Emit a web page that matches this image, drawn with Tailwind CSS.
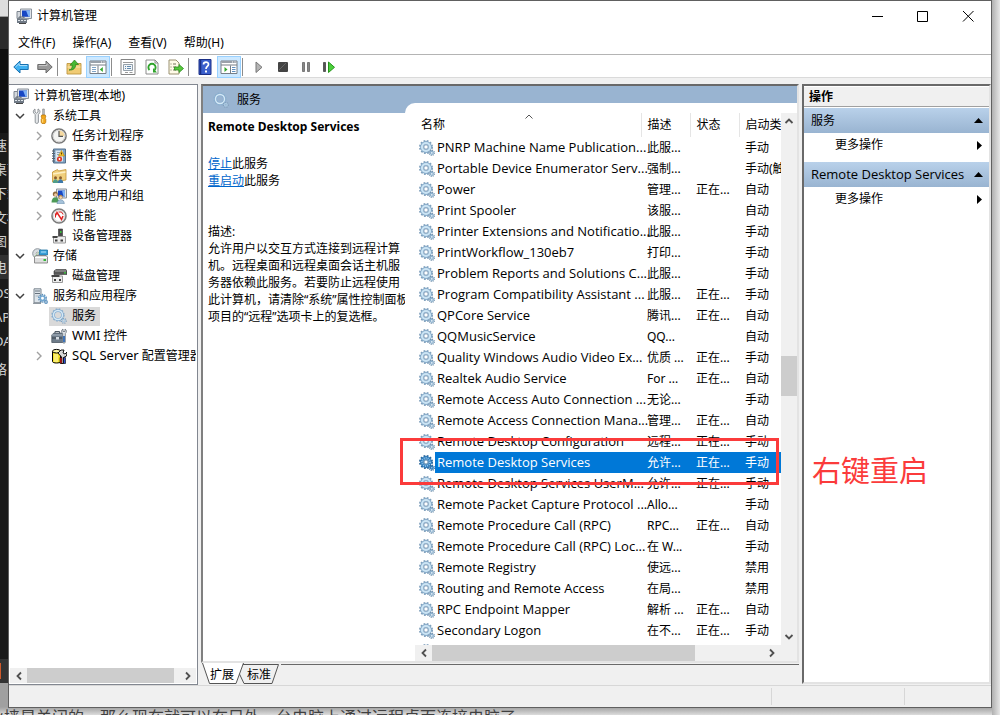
<!DOCTYPE html>
<html lang="zh-CN">
<head>
<meta charset="utf-8">
<title>计算机管理</title>
<script src="https://cdn.jsdelivr.net/npm/@tailwindcss/browser@4"></script>
</head>
<body class="relative h-screen overflow-hidden bg-[#e4e4e4] px-2 pb-[7px] font-['Noto_Sans','Noto_Sans_CJK_SC',sans-serif] text-xs text-black">

<svg class="hidden" aria-hidden="true">
  <symbol id="i-gear" viewBox="0 0 16 16">
    <circle cx="7" cy="7" r="5.9" fill="none" stroke="#7f9fbb" stroke-width="2.2" stroke-dasharray="1.7 1.39"/>
    <circle cx="7" cy="7" r="4.2" fill="none" stroke="#86abca" stroke-width="3.4"/>
    <circle cx="7" cy="7" r="4" fill="none" stroke="#cbe4f4" stroke-width="2.2"/>
    <circle cx="7" cy="7" r="2.2" fill="#fff" stroke="#6388aa" stroke-width=".8"/>
    <circle cx="12.8" cy="12.8" r="2.5" fill="none" stroke="#7392ad" stroke-width="1.4" stroke-dasharray="1 .96"/>
    <circle cx="12.8" cy="12.8" r="1.5" fill="#e9f2f8" stroke="#8cb0cd" stroke-width="1.3"/>
  </symbol>
  <symbol id="i-gear-sel" viewBox="0 0 16 16">
    <circle cx="7" cy="7" r="5.9" fill="none" stroke="#2a669a" stroke-width="2.2" stroke-dasharray="1.7 1.39"/>
    <circle cx="7" cy="7" r="4.2" fill="none" stroke="#2c78b8" stroke-width="3.4"/>
    <circle cx="7" cy="7" r="4" fill="none" stroke="#8cc2ea" stroke-width="2" stroke-dasharray="1 1"/>
    <circle cx="7" cy="7" r="2.1" fill="#fff" stroke="#245f92" stroke-width=".8"/>
    <circle cx="12.8" cy="12.8" r="2.5" fill="none" stroke="#2a669a" stroke-width="1.4" stroke-dasharray="1 .96"/>
    <circle cx="12.8" cy="12.8" r="1.4" fill="#9cc8ec" stroke="#2c78b8" stroke-width="1.2"/>
  </symbol>
  <symbol id="i-gear-light" viewBox="0 0 16 16">
    <circle cx="7" cy="7" r="5.9" fill="none" stroke="#8fb0cc" stroke-width="1.6" stroke-dasharray="1.7 1.39"/>
    <circle cx="7" cy="7" r="4.5" fill="none" stroke="#86add0" stroke-width="2.8"/>
    <circle cx="7" cy="7" r="4.5" fill="none" stroke="#d5e9f6" stroke-width="1.4"/>
    <circle cx="12.8" cy="12.8" r="2.4" fill="none" stroke="#7f9cb8" stroke-width="1.3" stroke-dasharray="1 .9"/>
    <circle cx="12.8" cy="12.8" r="1.4" fill="none" stroke="#a9c8e0" stroke-width="1.2"/>
  </symbol>
  <symbol id="i-computer" viewBox="0 0 16 16">
    <path d="M1 3.5h4v7H1z" fill="#d5d9de" stroke="#7d858f"/>
    <path d="M4.5 1h11v9.5h-11z" fill="#dfe3e8" stroke="#8b929b"/>
    <path d="M6 2.5h8v6.3H6z" fill="#1746c4"/>
    <path d="M10 2.5h4v6.3h-1.5z" fill="#7fb2f5"/>
    <path d="M7 10.5h5l1 1.5H7z" fill="#a2a9b2"/>
    <path d="M1 11h10v4H1z" fill="#707a86"/>
    <path d="M3 10V9h5v1" fill="none" stroke="#5d6670"/>
    <path d="M2 12.5h8" stroke="#dfe5ea" stroke-dasharray="2 1"/>
    <path d="M3 15.5h7" stroke="#444"/>
  </symbol>
  <symbol id="i-tools" viewBox="0 0 16 16">
    <path d="M3 1v3l1.5 1.2L6 4V1c1.6.6 2.2 2 1.9 3.4L6.4 6.6v7.6c0 1.6-3.2 1.6-3.2 0V6.6L1.6 4.9C.9 3.4 1.5 1.8 3 1z" fill="#e5e8ea" stroke="#868b90" stroke-width=".9"/>
    <path d="M10.7 1h1.6v6h-1.6z" fill="#c7cacc" stroke="#777" stroke-width=".6"/>
    <path d="M9.7 7h3.6l.6 2-1 1 .9 1.2v3L13 15.5h-3l-.8-1.3v-3l.9-1.2-1-1z" fill="#f2a71c" stroke="#b77404" stroke-width=".7"/>
    <path d="M10.7 11v3.5" stroke="#ffe18a"/>
  </symbol>
  <symbol id="i-clock" viewBox="0 0 16 16">
    <circle cx="8" cy="8" r="7.1" fill="#f4f4f2" stroke="#777" stroke-width="1.5"/>
    <circle cx="8" cy="8" r="5.8" fill="none" stroke="#d4d4d4"/>
    <path d="M8 8V2.5A5.5 5.5 0 0 1 13.5 8z" fill="#f5d9a0"/>
    <path d="M8 3v5.3h4" fill="none" stroke="#555" stroke-width="1.2"/>
  </symbol>
  <symbol id="i-event" viewBox="0 0 16 16">
    <path d="M2.500 1h12v14h-12z" fill="#7fa3c4" stroke="#55718d"/>
    <path d="M4.500 2.500h7.500v11H4.500z" fill="#dbe7f1"/>
    <path d="M1 3h3M1 5.500h3M1 8h3M1 10.500h3M1 13h3" stroke="#59636d"/>
    <path d="M6 4.500h3M6 6.500h2" stroke="#8aa0b5"/>
    <path d="M10.500 2.500l3 5.500h-6z" fill="#f7c62f" stroke="#b58409" stroke-width=".6"/>
    <path d="M10.500 4.500v2" stroke="#5a3b00"/>
    <circle cx="8.500" cy="11" r="2.600" fill="#dc3a28"/><circle cx="8.500" cy="11" r=".9" fill="#fff"/>
  </symbol>
  <symbol id="i-share" viewBox="0 0 16 16">
    <path d="M1.500 4l5-2.500 1 1.500 7.500-1.500V12L1.500 14z" fill="#f0cf7c" stroke="#c49536" stroke-width=".8"/>
    <path d="M2 6l12.500-2" stroke="#fdf0c4" stroke-width="1.500"/>
    <circle cx="4.500" cy="9.800" r="1.500" fill="#8b5d2d"/><path d="M1.800 15c0-5 5.200-5 5.400 0z" fill="#4f9d8a"/>
    <circle cx="9.500" cy="9.800" r="1.500" fill="#8b5d2d"/><path d="M6.800 15c.2-5 5.200-5 5.400 0z" fill="#3d78a8"/>
  </symbol>
  <symbol id="i-users" viewBox="0 0 16 16">
    <path d="M5.5 1h10v9h-10z" fill="#dfe3e8" stroke="#8b929b"/>
    <path d="M7 2.5h7v6H7z" fill="#1746c4"/><path d="M11 2.5h3v6h-1.5z" fill="#7fb2f5"/>
    <circle cx="4.3" cy="6" r="2.5" fill="#8f6a3d"/><circle cx="4.6" cy="6.8" r="1.5" fill="#f0c9a0"/>
    <path d="M.5 14.5c0-7 7.5-7 7.5 0z" fill="#4d9a57"/>
    <circle cx="9.500" cy="9" r="2.200" fill="#ad8653"/><circle cx="9.700" cy="9.600" r="1.300" fill="#f4d5b2"/>
    <path d="M6 15.800c0-5.500 7.300-5.500 7.300 0z" fill="#a5c2da" stroke="#587c9d" stroke-width=".5"/>
  </symbol>
  <symbol id="i-perf" viewBox="0 0 16 16">
    <circle cx="8" cy="8" r="7" fill="#fff" stroke="#7c7c7c" stroke-width="1.600"/>
    <circle cx="8" cy="8" r="5.500" fill="none" stroke="#bbb" stroke-width=".6"/>
    <path d="M4.500 7.500L6 4.500l4.500 7 1.500-3.500" fill="none" stroke="#e02020" stroke-width="1.500"/>
    <path d="M4.500 5.500v4M7.500 4h3l1.500 2.500" fill="none" stroke="#d61f1f"/>
  </symbol>
  <symbol id="i-device" viewBox="0 0 16 16">
    <path d="M7.5 1h4v8h-4z" fill="#4a4a4a" stroke="#333" stroke-width=".6"/><path d="M9 3h1.5v2H9z" fill="#39c43b"/>
    <path d="M2.5 8.5h12v6.5h-12z" fill="#ececec" stroke="#9a9a9a"/><path d="M1.5 8h5v2h-5z" fill="#444"/>
    <path d="M4 11.5h2.5v2H4zM9.5 11.5H12v2H9.5z" fill="#3d3d3d"/>
  </symbol>
  <symbol id="i-storage" viewBox="0 0 16 16">
    <circle cx="5.5" cy="5.5" r="4.8" fill="#d9dde0" stroke="#8d959c"/><circle cx="5.5" cy="5.5" r="1.3" fill="#fff" stroke="#777" stroke-width=".6"/>
    <path d="M5.5 5.5L9 2.2M5.5 5.5L2 9" stroke="#a9cf9f"/>
    <path d="M7.5 2h8v5h-8z" fill="#3aa0d8" stroke="#1f73a5" stroke-width=".8"/><path d="M9 4h5" stroke="#b8e3fa"/>
    <path d="M2.5 9l1.5-1.5h10L15.5 9v6h-13z" fill="#dedede" stroke="#777" stroke-width=".8"/><path d="M3 9.5h12" stroke="#fff"/><path d="M11.500 11h2.500v2h-2.500z" fill="#35b53a"/>
  </symbol>
  <symbol id="i-disk" viewBox="0 0 16 16">
    <path d="M3 3l2-1.5h10L16 3v3.500H3z" fill="#555" stroke="#3b3b3b" stroke-width=".6"/><path d="M4 3h11" stroke="#aaa"/><path d="M13 4.200h2v1.300h-2z" fill="#39d43b"/>
    <path d="M1.500 8h10v6.500h-10z" fill="#ececec" stroke="#9a9a9a"/><path d="M.5 7h8v2h-8z" fill="#444"/>
    <path d="M3 11h2v2H3zM8 11h2v2H8z" fill="#3d3d3d"/>
  </symbol>
  <symbol id="i-server" viewBox="0 0 16 16">
    <path d="M2 .8h7v14H2z" fill="#dde4ea" stroke="#7d8790"/><path d="M3 3h5M3 5.500h5" stroke="#66727d"/><path d="M3.500 8h4" stroke="#aab5be"/><path d="M1 15.300h8" stroke="#7d8790"/>
    <circle cx="10.500" cy="10.300" r="3.700" fill="none" stroke="#5b90bd" stroke-width="1.500" stroke-dasharray="1.400 .92"/>
    <circle cx="10.500" cy="10.300" r="2.300" fill="#fff" stroke="#72a7d0" stroke-width="1.700"/>
    <circle cx="14" cy="14" r="1.300" fill="#fff" stroke="#5b90bd" stroke-width="1.200"/>
  </symbol>
  <symbol id="i-wmi" viewBox="0 0 16 16">
    <path d="M.8 7l2-2h8l2 2v7.500H.8z" fill="#6d7b89" stroke="#4d5863" stroke-width=".8"/><path d="M4 5V3.500h4.500V5" fill="none" stroke="#4d5863"/>
    <path d="M1 7h11.500" stroke="#aebac5"/><path d="M1 10h11" stroke="#39424b"/><path d="M5 9h3v2.500H5z" fill="#d4dbe1"/>
    <path d="M12 1v2.500h2V1c1.700 1 2 3 .3 4.600V14c0 1.600-2.600 1.600-2.600 0V5.600C10 4 10.300 2 12 1z" fill="#dfe4e8" stroke="#68727b" stroke-width=".8"/><path d="M13 8v6" stroke="#3f74b9" stroke-width="2"/>
  </symbol>
  <symbol id="i-sql" viewBox="0 0 16 16">
    <path d="M1.500 3.500v10c0 2 8 2 8 0v-10z" fill="#f6e329" stroke="#000"/><ellipse cx="5.500" cy="3.200" rx="4" ry="1.800" fill="#fff9a6" stroke="#000"/>
    <path d="M4 6v8M6 6v8" stroke="#fffbc0"/>
    <path d="M7 5l3-3h3l-1 3 2 1 2-2-.5 4-3 1.500v6h-2V9z" fill="#d7d7d7" stroke="#000" stroke-width=".9"/>
    <path d="M9 9.500h2v6H9z" fill="#d81e1e" stroke="#000" stroke-width=".6"/><path d="M12.500 9.500h2v6h-2z" fill="#2a4fd0" stroke="#000" stroke-width=".6"/>
  </symbol>
  <symbol id="i-back" viewBox="0 0 16 16"><path d="M.8 8L7 2v3.500h8.200v5H7V14z" fill="#3fb0f0" stroke="#1670b0"/><path d="M2.500 8L6.200 4.500V6.500h8" fill="none" stroke="#a7dcfa"/></symbol>
  <symbol id="i-forward" viewBox="0 0 16 16"><path d="M15.200 8L9 2v3.500H.8v5H9V14z" fill="#999" stroke="#6a6a6a"/><path d="M1.800 6.500H10V4.500" fill="none" stroke="#c6c6c6"/></symbol>
  <symbol id="i-up" viewBox="0 0 16 16"><path d="M1 4.500h5l1.500 1.500H9l1-1.500h5V15H1z" fill="#f0cb74" stroke="#bd9640" stroke-width=".9"/><path d="M1.500 8h13" stroke="#f9e5ae"/><path d="M3 11c2.500-.5 3.300-2 3.300-4.800H4L8.500 1l4 4.500h-2.800C9.700 9 7.500 11.500 3 11z" fill="#48b834" stroke="#277c1a" stroke-width=".7"/></symbol>
  <symbol id="i-tree" viewBox="0 0 18 16"><path d="M1 2h16v12.500H1z" fill="#fff" stroke="#777e86"/><path d="M1.500 3h15" stroke="#9aa1a9" stroke-width="2"/><path d="M12 3h1M14.500 3h1" stroke="#fff"/><path d="M1 6h16" stroke="#777e86"/><path d="M9 6.500v8" stroke="#777e86"/><path d="M3 8.500h4M3 10.500h4M3 12.500h4" stroke="#7fa4c7"/><path d="M13.800 8v5l-3-2.500z" fill="#31a82d"/></symbol>
  <symbol id="i-actions" viewBox="0 0 18 16"><path d="M1 2h16v12.500H1z" fill="#fff" stroke="#777e86"/><path d="M1.500 3h15" stroke="#9aa1a9" stroke-width="2"/><path d="M12 3h1M14.500 3h1" stroke="#fff"/><path d="M1 6h16" stroke="#777e86"/><path d="M10.500 6.500v8" stroke="#777e86"/><path d="M12 8.500h3.500M12 10.500h3.500M12 12.500h3.500" stroke="#5e8fbf"/><path d="M4.500 8v5l3-2.500z" fill="#31a82d"/></symbol>
  <symbol id="i-props" viewBox="0 0 16 16"><path d="M1 .5h14v15H1z" fill="#fff" stroke="#848484"/><path d="M3 3.500h10" stroke="#999"/><path d="M3.500 5.500h9v6h-9z" fill="#f1f5f8" stroke="#95a0aa"/><path d="M5 7.500h1M7 7.500h4M5 9.500h1M7 9.500h4" stroke="#6189ad"/><path d="M5 13.500h3M9.500 13.500h3" stroke="#999"/></symbol>
  <symbol id="i-refresh" viewBox="0 0 16 16"><path d="M2 1h9l3 3v11H2z" fill="#fff" stroke="#8c8c8c"/><path d="M11 1v3h3" fill="none" stroke="#8c8c8c"/><path d="M5.500 11A3.600 3.600 0 1 1 10.500 11" fill="none" stroke="#2fa32b" stroke-width="1.900"/><path d="M9 9v4.500h4z" fill="#2fa32b"/></symbol>
  <symbol id="i-export" viewBox="0 0 16 16"><path d="M1 1h7l3 3v11H1z" fill="#fffbe8" stroke="#9a9171"/><path d="M2.500 5h1M5 5h3M2.500 8h1M5 8h3M2.500 11h1M5 11h3" stroke="#77745f"/><path d="M6.500 8h4.500V5.500L15.500 9.500 11 13.500V11H6.500z" fill="#58c83e" stroke="#2b8d1d" stroke-width=".8"/></symbol>
  <symbol id="i-help" viewBox="0 0 16 16"><path d="M2 .5h12v15H2z" fill="#3a5fcc" stroke="#1b2f86"/><path d="M3.500 1v14" stroke="#1b2f86" stroke-width="1.500"/><path d="M6.500 5.500C6.500 2.300 11.500 2.300 11.500 5.300 11.500 7.500 9 7.500 9 10" fill="none" stroke="#fff" stroke-width="1.700"/><path d="M8 11.500h2v2H8z" fill="#fff"/></symbol>
  <symbol id="i-play" viewBox="0 0 16 16"><path d="M5 3v10.500l6-5.200z" fill="#b4b4b4" stroke="#777"/></symbol>
  <symbol id="i-stop" viewBox="0 0 16 16"><rect x="3" y="3" width="10" height="10" rx="1" fill="#444"/><path d="M4 11L11 4" stroke="#666"/></symbol>
  <symbol id="i-pause" viewBox="0 0 16 16"><path d="M4.500 3.500h2v9h-2zM9.500 3.500h2v9h-2z" fill="#888" stroke="#666" stroke-width=".8"/></symbol>
  <symbol id="i-restart" viewBox="0 0 16 16"><path d="M2.500 3.500h2v9h-2z" fill="#555" stroke="#444" stroke-width=".8"/><path d="M7.500 3v10.500l6-5.200z" fill="#4cd03c" stroke="#249519"/></symbol>
  <symbol id="c-right" viewBox="0 0 10 10"><path d="M3 1l4 4-4 4" fill="none" stroke="#a0a0a0" stroke-width="1.400"/></symbol>
  <symbol id="c-down" viewBox="0 0 10 10"><path d="M1 3l4 4 4-4" fill="none" stroke="#404040" stroke-width="1.500"/></symbol>
  <symbol id="s-left" viewBox="0 0 10 10"><path d="M7 1.500L3.500 5 7 8.500" fill="none" stroke="#505050" stroke-width="1.800"/></symbol>
  <symbol id="s-right" viewBox="0 0 10 10"><path d="M3 1.500L6.500 5 3 8.500" fill="none" stroke="#505050" stroke-width="1.800"/></symbol>
  <symbol id="s-up" viewBox="0 0 10 10"><path d="M1.500 7L5 3.500 8.500 7" fill="none" stroke="#505050" stroke-width="1.800"/></symbol>
  <symbol id="s-down" viewBox="0 0 10 10"><path d="M1.500 3L5 6.500 8.500 3" fill="none" stroke="#505050" stroke-width="1.800"/></symbol>
</svg>

<!-- Desktop content behind the window -->
<div class="absolute inset-y-0 left-0 w-2 overflow-hidden whitespace-nowrap bg-[#1a1a1a] text-[13px] leading-6 text-[#d0d0d0]" aria-hidden="true">
  <div class="h-[17px] border-b border-[#999] bg-[#dedede]"></div>
  <div class="h-8 bg-[#2c2c2c]"></div>
  <div class="h-[84px] bg-black/40"></div>
  <ul class="-ml-1.5">
    <li>速</li><li>桌面</li><li>下载</li><li>文档</li><li>图</li>
    <li class="my-0.5 bg-[#303030]">电</li>
    <li>DS</li><li>AP</li><li>DA</li><li class="pt-1">络</li>
  </ul>
</div>
<div class="absolute bottom-8 left-0 h-6 w-2 bg-[#333] py-1" aria-hidden="true"><div class="h-4 w-px bg-[#d0592a]"></div></div>
<div class="absolute inset-x-0 bottom-0 h-8 bg-linear-to-b from-[#a0a0a0] from-75% to-[#dcdcdc]" aria-hidden="true"></div>
<div class="absolute inset-y-0 right-0 w-2 bg-linear-to-r from-[#b0b0b0] to-[#e6e6e6]" aria-hidden="true"></div>
<p class="absolute -bottom-3 -left-3 h-5 overflow-hidden whitespace-nowrap text-base leading-5 text-[#404040]" aria-hidden="true">火墙是关闭的，那么现在就可以在另外一台电脑上通过远程桌面连接电脑了</p>

<main class="relative flex h-full flex-col border border-[#606060] bg-[#f0f0f0]">
  <header class="flex h-[29px] shrink-0 items-center bg-white pl-[7px]">
    <svg class="size-4"><use href="#i-computer"/></svg>
    <h1 class="ml-[5px] flex-1 font-normal">计算机管理</h1>
    <button class="flex h-full w-[45px] items-center justify-center" aria-label="最小化"><svg class="h-3 w-3" viewBox="0 0 12 12"><path d="M1 6.500h11" stroke="#000"/></svg></button>
    <button class="flex h-full w-[46px] items-center justify-center" aria-label="最大化"><svg class="h-3 w-3" viewBox="0 0 12 12"><path d="M1.500 1.500h10v10h-10z" fill="none" stroke="#000"/></svg></button>
    <button class="flex h-full w-[46px] items-center justify-center" aria-label="关闭"><svg class="h-3 w-3" viewBox="0 0 12 12"><path d="M1 1l10.500 10.500M11.500 1L1 11.500" stroke="#000"/></svg></button>
  </header>

  <nav class="flex h-[25px] shrink-0 items-center gap-[17px] border-b border-[#b4b4b4] bg-white pt-px pl-[9px]">
    <button>文件(F)</button><button>操作(A)</button><button>查看(V)</button><button>帮助(H)</button>
  </nav>

  <div class="flex h-[23px] shrink-0 items-center border-b border-[#dadada] bg-white pt-px" role="toolbar">
    <button class="flex w-6 justify-center" aria-label="后退"><svg class="size-4"><use href="#i-back"/></svg></button>
    <button class="flex w-[23px] justify-center" aria-label="前进"><svg class="size-4"><use href="#i-forward"/></svg></button>
    <span class="mr-1 ml-px h-[18px] w-px bg-[#8c8c8c]"></span>
    <button class="flex w-6 justify-center" aria-label="向上一级"><svg class="size-4"><use href="#i-up"/></svg></button>
    <button class="flex h-[22px] w-6 items-center justify-center border border-[#99d1ff] bg-[#cce8ff]" aria-label="显示控制台树"><svg class="h-4 w-[18px]"><use href="#i-tree"/></svg></button>
    <span class="mr-1 ml-px h-[18px] w-px bg-[#8c8c8c]"></span>
    <button class="flex w-6 justify-center" aria-label="属性"><svg class="size-4"><use href="#i-props"/></svg></button>
    <button class="flex w-6 justify-center" aria-label="刷新"><svg class="size-4"><use href="#i-refresh"/></svg></button>
    <button class="flex w-[23px] justify-center" aria-label="导出列表"><svg class="size-4"><use href="#i-export"/></svg></button>
    <span class="mr-1 ml-px h-[18px] w-px bg-[#8c8c8c]"></span>
    <button class="flex w-6 justify-center" aria-label="帮助"><svg class="size-4"><use href="#i-help"/></svg></button>
    <button class="flex h-[22px] w-6 items-center justify-center border border-[#99d1ff] bg-[#cce8ff]" aria-label="显示操作窗格"><svg class="h-4 w-[18px]"><use href="#i-actions"/></svg></button>
    <span class="mr-1 ml-px h-[18px] w-px bg-[#8c8c8c]"></span>
    <button class="flex w-6 justify-center" aria-label="启动"><svg class="size-4"><use href="#i-play"/></svg></button>
    <button class="flex w-[23px] justify-center" aria-label="停止"><svg class="size-4"><use href="#i-stop"/></svg></button>
    <button class="flex w-[23px] justify-center" aria-label="暂停"><svg class="size-4"><use href="#i-pause"/></svg></button>
    <button class="flex w-[23px] justify-center" aria-label="重新启动"><svg class="size-4"><use href="#i-restart"/></svg></button>
  </div>

  <div class="flex min-h-0 flex-1 pt-[6px]">
    <!-- Console tree -->
    <aside class="flex w-[189px] shrink-0 flex-col border border-l-0 border-[#828790] bg-white">
      <ul id="tree" class="mr-px min-h-0 flex-1 overflow-hidden pt-px whitespace-nowrap"></ul>
      <div class="mx-px mb-px flex h-[15px] shrink-0 items-center bg-[#f0f0f0]">
        <button class="flex w-[17px] justify-center" aria-label="向左滚动"><svg class="size-[10px]"><use href="#s-left"/></svg></button>
        <div class="flex h-full flex-1"><div class="h-full w-[147px] bg-[#cdcdcd]"></div></div>
        <button class="flex w-[17px] justify-center" aria-label="向右滚动"><svg class="size-[10px]"><use href="#s-right"/></svg></button>
      </div>
    </aside>

    <!-- Services view -->
    <div class="ml-[3px] flex min-w-0 flex-1 flex-col">
      <section class="relative flex min-h-0 flex-1 flex-col border-2 border-t-[#696969] border-r-[#e3e3e3] border-b-[#e3e3e3] border-l-[#808080] bg-white">
        <div class="flex h-[27px] shrink-0 items-center bg-[#99b4d1] pl-[10px]">
          <svg class="size-4"><use href="#i-gear-light"/></svg><h2 class="ml-2 font-normal">服务</h2>
        </div>
        <div class="flex min-h-0 flex-1">
          <div class="w-[202px] shrink-0 pt-[5px] pl-[5px] leading-[17px]">
            <h3 class="leading-[17px] font-bold whitespace-nowrap">Remote Desktop Services</h3>
            <p class="mt-5"><a href="#" class="text-[#0066cc] underline">停止</a>此服务</p>
            <p><a href="#" class="text-[#0066cc] underline">重启动</a>此服务</p>
            <p class="mt-[34px]">描述:</p>
            <p class="whitespace-nowrap">允许用户以交互方式连接到远程计算<br>机。远程桌面和远程桌面会话主机服<br>务器依赖此服务。若要防止远程使用<br>此计算机，请清除“系统”属性控制面板<br>项目的“远程”选项卡上的复选框。</p>
          </div>
          <div class="-mt-[10px] flex min-w-0 flex-1 flex-col rounded-tl-[10px] bg-white pt-[10px]">
            <div class="flex min-h-0 flex-1 pl-[10px]">
              <div class="min-h-0 min-w-0 flex-1 overflow-hidden">
                <table class="w-[400px] table-fixed border-collapse">
                  <colgroup><col class="w-[226px]"><col class="w-[49px]"><col class="w-[49px]"><col class="w-[76px]"></colgroup>
                  <thead><tr class="h-6 text-left">
                    <th class="relative border-r border-[#e5e5e5] pl-[6px] font-normal">名称<svg class="absolute top-0 left-[110px] size-2" viewBox="0 0 8 8"><path d="M.5 5.500L4 2l3.500 3.500" fill="none" stroke="#555"/></svg></th>
                    <th class="border-r border-[#e5e5e5] pl-[6px] font-normal">描述</th>
                    <th class="border-r border-[#e5e5e5] pl-[6px] font-normal">状态</th>
                    <th class="pl-[6px] font-normal whitespace-nowrap">启动类型</th>
                  </tr></thead>
                  <tbody id="services"></tbody>
                </table>
              </div>
              <div class="flex w-4 shrink-0 flex-col items-center bg-[#f0f0f0]">
                <button class="flex h-4 items-center" aria-label="向上滚动"><svg class="size-[10px]"><use href="#s-up"/></svg></button>
                <div class="w-full flex-[227]"></div>
                <div class="h-10 w-full bg-[#cdcdcd]"></div>
                <div class="w-full flex-[234]"></div>
                <button class="flex h-4 items-center" aria-label="向下滚动"><svg class="size-[10px]"><use href="#s-down"/></svg></button>
              </div>
            </div>
            <div class="ml-[10px] flex h-4 shrink-0 items-center bg-[#f0f0f0] pr-[17px]">
              <button class="flex w-[17px] justify-center" aria-label="向左滚动"><svg class="size-[10px]"><use href="#s-left"/></svg></button>
              <div class="h-full flex-1"><div class="h-full w-[263px] bg-[#cdcdcd]"></div></div>
              <button class="flex w-[17px] justify-center" aria-label="向右滚动"><svg class="size-[10px]"><use href="#s-right"/></svg></button>
            </div>
          </div>
        </div>
        <!-- Highlight drawn round the selected service -->
        <div class="pointer-events-none absolute top-[352px] right-[18px] left-[197px] h-[47px] border-3 border-[#fb3b3b]"></div>
      </section>
      <div class="relative flex h-[22px] shrink-0 items-start" role="tablist">
        <svg class="absolute top-0 left-0 h-[21px] w-20" viewBox="0 0 80 21"><path d="M39.500 1.500H77.500L71 20.500H43L38 10" fill="#f0f0f0" stroke="#555"/><path d="M1.500 0L8.500 20.500H35L42.500 0" fill="#fff" stroke="#555"/></svg>
        <div class="ml-20 h-0.5 flex-1 border-b border-[#696969]"></div>
        <button class="absolute top-px left-[9px] h-[21px]" role="tab" aria-selected="true">扩展</button>
        <button class="absolute top-px left-[46px] h-[21px]" role="tab" aria-selected="false">标准</button>
      </div>
    </div>

    <!-- Actions pane -->
    <section class="mb-px ml-[3px] w-[189px] shrink-0 border-2 border-t-[#696969] border-r-[#e3e3e3] border-b-[#e3e3e3] border-l-[#696969] bg-white">
      <h2 class="mt-px flex h-[20px] items-center border-b border-[#a0a0a0] bg-[#f0f0f0] pl-[5px] font-bold">操作</h2>
      <button class="mt-px flex h-[25px] w-full items-center justify-between bg-linear-to-b from-[#b9d1ea] to-[#99b4d1] pr-[6px] pl-[7px]">服务<svg class="h-[5px] w-[9px]" viewBox="0 0 9 5"><path d="M4.500 0L9 5H0z"/></svg></button>
      <button class="flex h-[24px] w-full items-center justify-between pr-[7px] pl-[31px]">更多操作<svg class="h-[9px] w-[5px]" viewBox="0 0 5 9"><path d="M0 0l5 4.500L0 9z"/></svg></button>
      <button class="mt-[5px] flex h-[25px] w-full items-center justify-between bg-linear-to-b from-[#b9d1ea] to-[#99b4d1] pr-[6px] pl-[7px] font-['Open_Sans','Noto_Sans_CJK_SC',sans-serif] text-[13px] whitespace-nowrap">Remote Desktop Services<svg class="h-[5px] w-[9px]" viewBox="0 0 9 5"><path d="M4.500 0L9 5H0z"/></svg></button>
      <button class="flex h-[24px] w-full items-center justify-between pr-[7px] pl-[31px]">更多操作<svg class="h-[9px] w-[5px]" viewBox="0 0 5 9"><path d="M0 0l5 4.500L0 9z"/></svg></button>
    </section>
  </div>

  <footer class="flex h-[22px] shrink-0 justify-end border-t border-[#d7d7d7] py-0.5">
    <div class="w-[133px] border-l border-[#d7d7d7]"></div><div class="w-[87px] border-l border-[#d7d7d7]"></div>
  </footer>
  <p class="absolute top-[450px] right-[63px] text-[29px] leading-10 text-[#fb3b3b]">右键重启</p>
</main>

<script>
const tree = [
  [0, '', 'computer', '计算机管理(本地)'],
  [1, 'down', 'tools', '系统工具'],
  [2, 'right', 'clock', '任务计划程序'],
  [2, 'right', 'event', '事件查看器'],
  [2, 'right', 'share', '共享文件夹'],
  [2, 'right', 'users', '本地用户和组'],
  [2, 'right', 'perf', '性能'],
  [2, '', 'device', '设备管理器'],
  [1, 'down', 'storage', '存储'],
  [2, '', 'disk', '磁盘管理'],
  [1, 'down', 'server', '服务和应用程序'],
  [2, '', 'gear-light', '服务', true],
  [2, '', 'wmi', '<span class="text-[13px]">WMI</span> 控件'],
  [2, 'right', 'sql', '<span class="text-[13px]">SQL Server</span> 配置管理器'],
];
const indent = ['pl-0', 'pl-[6px]', 'pl-[25px]'];
document.getElementById('tree').innerHTML = tree.map(([level, arrow, icon, label, selected]) => `
  <li class="flex h-5 items-center ${indent[level]}">
    ${level ? `<svg class="mr-[5px] size-[10px] shrink-0">${arrow ? `<use href="#c-${arrow}"/>` : ''}</svg>` : ''}
    <span class="flex h-[19px] items-center ${level ? 'pl-0.5' : 'pl-1'} pr-1 ${selected ? 'bg-[#d9d9d9]' : ''}">
      <svg class="mr-[5px] size-4 shrink-0"><use href="#i-${icon}"/></svg><span>${label}</span>
    </span>
  </li>`).join('');

const services = [
  ['PNRP Machine Name Publication...', '此服...', '', '手动'],
  ['Portable Device Enumerator Serv...', '强制...', '', '手动(触发'],
  ['Power', '管理...', '正在...', '自动'],
  ['Print Spooler', '该服...', '', '自动'],
  ['Printer Extensions and Notificatio...', '此服...', '', '手动'],
  ['PrintWorkflow_130eb7', '打印...', '', '手动'],
  ['Problem Reports and Solutions C...', '此服...', '', '手动'],
  ['Program Compatibility Assistant ...', '此服...', '正在...', '手动'],
  ['QPCore Service', '腾讯...', '正在...', '自动'],
  ['QQMusicService', 'QQ...', '', '自动'],
  ['Quality Windows Audio Video Ex...', '优质 ...', '正在...', '手动'],
  ['Realtek Audio Service', 'For ...', '正在...', '自动'],
  ['Remote Access Auto Connection ...', '无论...', '', '手动'],
  ['Remote Access Connection Mana...', '管理...', '正在...', '自动'],
  ['Remote Desktop Configuration', '远程...', '正在...', '手动'],
  ['Remote Desktop Services', '允许...', '正在...', '手动'],
  ['Remote Desktop Services UserM...', '允许...', '正在...', '手动'],
  ['Remote Packet Capture Protocol ...', 'Allo...', '', '手动'],
  ['Remote Procedure Call (RPC)', 'RPC...', '正在...', '自动'],
  ['Remote Procedure Call (RPC) Loc...', '在 W...', '', '手动'],
  ['Remote Registry', '使远...', '', '禁用'],
  ['Routing and Remote Access', '在局...', '', '禁用'],
  ['RPC Endpoint Mapper', '解析 ...', '正在...', '自动'],
  ['Secondary Logon', '在不...', '正在...', '手动'],
  ['', '', '', ''],
];
document.getElementById('services').innerHTML = services.map(([name, description, status, startup], i) => {
  const on = i === 15;
  const cell = on ? 'bg-[#0078d7] text-white' : '';
  return `<tr class="h-[21px] whitespace-nowrap">
    <td class="p-0"><div class="flex h-[21px] items-center pl-1"><svg class="size-4 shrink-0"><use href="#${on ? 'i-gear-sel' : 'i-gear'}"/></svg><span class="flex-1 pl-0.5 font-['Open_Sans','Noto_Sans_CJK_SC',sans-serif] text-[13px] leading-[21px] ${cell}">${name}</span></div></td>
    <td class="p-0 pl-[6px] ${cell}">${description}</td>
    <td class="p-0 pl-[6px] ${cell}">${status}</td>
    <td class="p-0 pl-[6px] ${cell}">${startup}</td>
  </tr>`;
}).join('');
</script>
</body>
</html>
